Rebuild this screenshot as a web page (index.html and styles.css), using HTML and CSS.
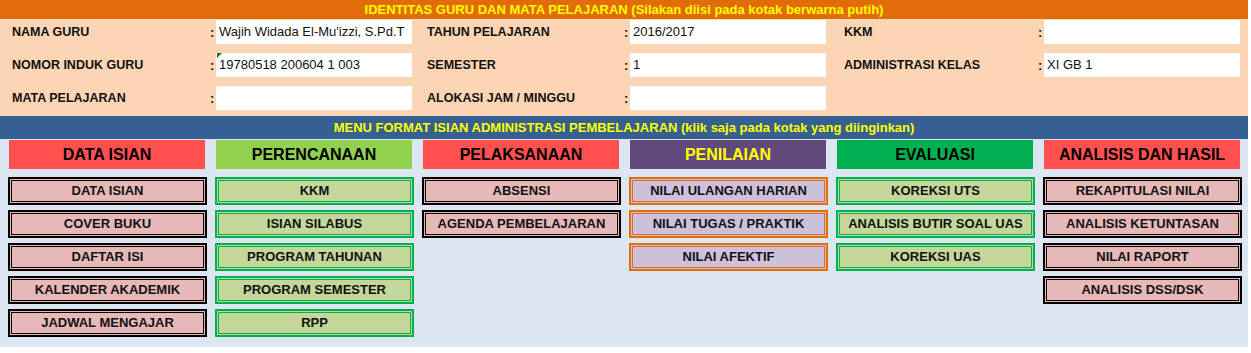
FILE: index.html
```html
<!DOCTYPE html>
<html lang="id">
<head>
    <meta charset="UTF-8">
    <meta name="viewport" content="width=device-width, initial-scale=1.0">
    <title>Administrasi Pembelajaran</title>
    <link rel="stylesheet" href="styles.css">
</head>
<body>
    <div class="sheet">
        <div class="bar bar-orange">IDENTITAS GURU DAN MATA PELAJARAN (Silakan diisi pada kotak berwarna putih)</div>

        <div class="identity">
            <div class="group">
                <div class="label">NAMA GURU</div>
                <div class="colon">:</div>
                <div class="box">Wajih Widada El-Mu'izzi, S.Pd.T</div>

                <div class="label">NOMOR INDUK GURU</div>
                <div class="colon">:</div>
                <div class="box box-flag">19780518 200604 1 003</div>

                <div class="label">MATA PELAJARAN</div>
                <div class="colon">:</div>
                <div class="box"></div>
            </div>

            <div class="group group-mid">
                <div class="label">TAHUN PELAJARAN</div>
                <div class="colon">:</div>
                <div class="box">2016/2017</div>

                <div class="label">SEMESTER</div>
                <div class="colon">:</div>
                <div class="box">1</div>

                <div class="label">ALOKASI JAM / MINGGU</div>
                <div class="colon">:</div>
                <div class="box"></div>
            </div>

            <div class="group group-last">
                <div class="label">KKM</div>
                <div class="colon">:</div>
                <div class="box"></div>

                <div class="label">ADMINISTRASI KELAS</div>
                <div class="colon">:</div>
                <div class="box">XI GB 1</div>
            </div>
        </div>

        <div class="bar bar-blue">MENU FORMAT ISIAN ADMINISTRASI PEMBELAJARAN (klik saja pada kotak yang diinginkan)</div>

        <div class="menu">
            <div class="menu-col">
                <div class="menu-head head-red">DATA ISIAN</div>
                <a class="btn btn-pink">DATA ISIAN</a>
                <a class="btn btn-pink">COVER BUKU</a>
                <a class="btn btn-pink">DAFTAR ISI</a>
                <a class="btn btn-pink">KALENDER AKADEMIK</a>
                <a class="btn btn-pink">JADWAL MENGAJAR</a>
            </div>

            <div class="menu-col">
                <div class="menu-head head-lime">PERENCANAAN</div>
                <a class="btn btn-green">KKM</a>
                <a class="btn btn-green">ISIAN SILABUS</a>
                <a class="btn btn-green">PROGRAM TAHUNAN</a>
                <a class="btn btn-green">PROGRAM SEMESTER</a>
                <a class="btn btn-green">RPP</a>
            </div>

            <div class="menu-col">
                <div class="menu-head head-red">PELAKSANAAN</div>
                <a class="btn btn-pink">ABSENSI</a>
                <a class="btn btn-pink">AGENDA PEMBELAJARAN</a>
            </div>

            <div class="menu-col">
                <div class="menu-head head-purple">PENILAIAN</div>
                <a class="btn btn-lilac">NILAI ULANGAN HARIAN</a>
                <a class="btn btn-lilac">NILAI TUGAS / PRAKTIK</a>
                <a class="btn btn-lilac">NILAI AFEKTIF</a>
            </div>

            <div class="menu-col">
                <div class="menu-head head-green">EVALUASI</div>
                <a class="btn btn-green">KOREKSI UTS</a>
                <a class="btn btn-green">ANALISIS BUTIR SOAL UAS</a>
                <a class="btn btn-green">KOREKSI UAS</a>
            </div>

            <div class="menu-col">
                <div class="menu-head head-red">ANALISIS DAN HASIL</div>
                <a class="btn btn-pink">REKAPITULASI NILAI</a>
                <a class="btn btn-pink">ANALISIS KETUNTASAN</a>
                <a class="btn btn-pink">NILAI RAPORT</a>
                <a class="btn btn-pink">ANALISIS DSS/DSK</a>
            </div>
        </div>
    </div>
</body>
</html>
```

FILE: styles.css
```css
body {
    margin: 0;
    background-color: #fff;
    font-family: "Liberation Sans", Arial, sans-serif;
    color: #111;
}

.sheet {
    width: 1248px;
}

/* title bars */
.bar {
    text-align: center;
    font-weight: bold;
    font-size: 13px;
    color: #ffff00;
}

.bar-orange {
    height: 19px;
    line-height: 19px;
    background-color: #e26b0a;
}

.bar-blue {
    height: 23px;
    line-height: 24px;
    background-color: #366092;
}

/* identitas guru */
.identity {
    display: flex;
    height: 97px;
    box-sizing: border-box;
    padding-top: 1px;
    background-color: #fcd5b4;
}

.group {
    display: grid;
    grid-template-columns: 210px 6px 196px;
    grid-auto-rows: 24px;
    row-gap: 9px;
    align-items: center;
    width: 414px;
}

.label {
    padding-left: 12px;
    font-size: 12.5px;
    font-weight: bold;
}

.group-mid .label {
    padding-left: 13px;
}

.group-last .label {
    padding-left: 16px;
}

.colon {
    font-size: 13px;
    font-weight: bold;
}

.box {
    position: relative;
    height: 24px;
    line-height: 24px;
    padding-left: 3px;
    background-color: #fff;
    font-size: 13px;
    white-space: nowrap;
    overflow: hidden;
}

/* excel "number as text" marker */
.box-flag::before {
    content: "";
    position: absolute;
    top: 0;
    left: 1px;
    border-top: 5px solid #1c7a1c;
    border-right: 5px solid transparent;
}

/* menu */
.menu {
    display: grid;
    grid-template-columns: repeat(6, 196px);
    column-gap: 11px;
    align-items: start;
    height: 208px;
    box-sizing: border-box;
    padding: 1px 0 10px 9px;
    background-color: #dce6f1;
}

.menu-col {
    display: flex;
    flex-direction: column;
    gap: 5px;
}

.menu-head {
    height: 29px;
    line-height: 30px;
    margin-bottom: 3px;
    text-align: center;
    font-size: 16px;
    font-weight: bold;
    color: #000;
}

.head-red { background-color: #ff5050; }
.head-lime { background-color: #92d050; }
.head-purple { background-color: #604a7b; color: #ffff00; }
.head-green { background-color: #00b050; }

.btn {
    display: block;
    height: 28px;
    line-height: 24px;
    margin: 0 -2px 0 -1px;
    box-sizing: border-box;
    text-align: center;
    font-size: 13px;
    font-weight: bold;
    color: #111;
    cursor: pointer;
}

.btn-pink {
    background-color: #e6b8b7;
    border: 2px solid #000;
    box-shadow: inset 0 0 0 1px #e6b8b7, inset 0 0 0 2px #000;
}

.btn-green {
    background-color: #c4d79b;
    border: 2px solid #00b050;
    box-shadow: inset 0 0 0 1px #c4d79b, inset 0 0 0 2px #00b050;
}

.btn-lilac {
    background-color: #ccc0da;
    border: 2px solid #e26b0a;
    box-shadow: inset 0 0 0 1px #ccc0da, inset 0 0 0 2px #e26b0a;
}
```
